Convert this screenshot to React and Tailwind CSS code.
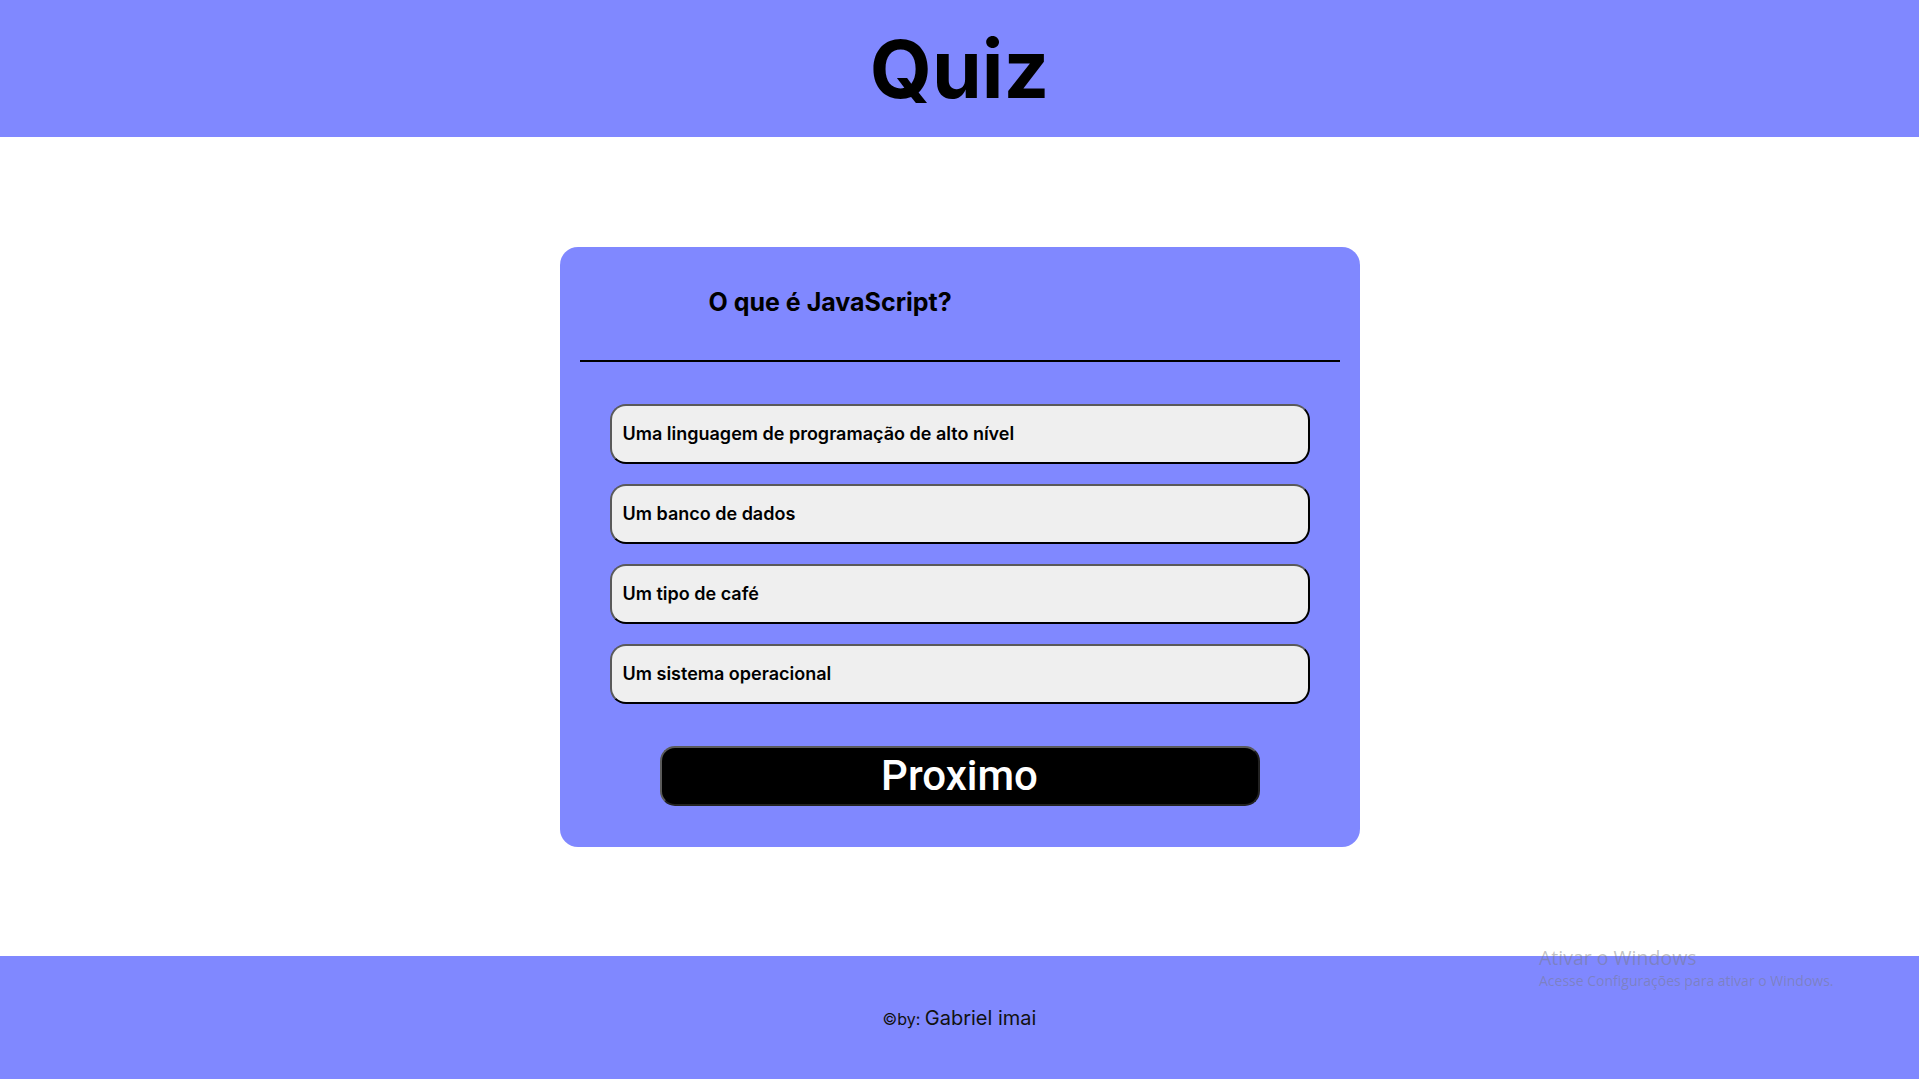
export default function App() {
  const options = [
    "Uma linguagem de programação de alto nível",
    "Um banco de dados",
    "Um tipo de café",
    "Um sistema operacional",
  ];
  return (
    <div className="relative flex min-h-screen flex-col bg-white font-['Inter',sans-serif]">
      <header className="flex h-[137px] items-center justify-center bg-[#8088ff]">
        <h1 className="text-[80px] font-bold leading-none text-black">Quiz</h1>
      </header>
      <main className="flex h-[819px] items-center justify-center">
        <div className="flex h-[600px] w-[800px] flex-col rounded-[18px] bg-[#8088ff]">
          <div className="flex h-[113px] items-center pl-[149px]">
            <h2 className="text-[25px] font-bold text-black">O que é JavaScript?</h2>
          </div>
          <div className="mx-[20px] h-[2px] bg-black" />
          <div className="mt-[42px] flex flex-col items-center gap-[20px]">
            {options.map((o) => (
              <button
                key={o}
                className="flex h-[60px] w-[700px] items-center rounded-[16px] border-2 border-t-[#5a5a5a] border-l-[#5a5a5a] border-r-black border-b-black bg-[#efefef] pl-[11px] text-left text-[18px] font-semibold text-black"
              >
                {o}
              </button>
            ))}
          </div>
          <div className="mt-[42px] flex justify-center">
            <button className="flex h-[60px] w-[600px] items-center justify-center rounded-[15px] border-2 border-t-[#5a5a5a] border-l-[#5a5a5a] border-r-[#222] border-b-[#222] bg-black font-['Roboto',sans-serif] text-[42px] font-medium text-white">
              Proximo
            </button>
          </div>
        </div>
      </main>
      <footer className="flex h-[123px] items-center justify-center bg-[#8088ff] pt-[1px]">
        <p className="text-[#111]">
          <span className="text-[16px]">©by: </span>
          <span className="text-[20px]">Gabriel imai</span>
        </p>
      </footer>
      <div className="pointer-events-none absolute left-[1539px] top-[945px] font-['Open_Sans',sans-serif] text-[rgba(120,120,120,0.45)]">
        <div className="text-[19.5px] leading-[26px]">Ativar o Windows</div>
        <div className="text-[14px] leading-[20px]">Acesse Configurações para ativar o Windows.</div>
      </div>
    </div>
  );
}
